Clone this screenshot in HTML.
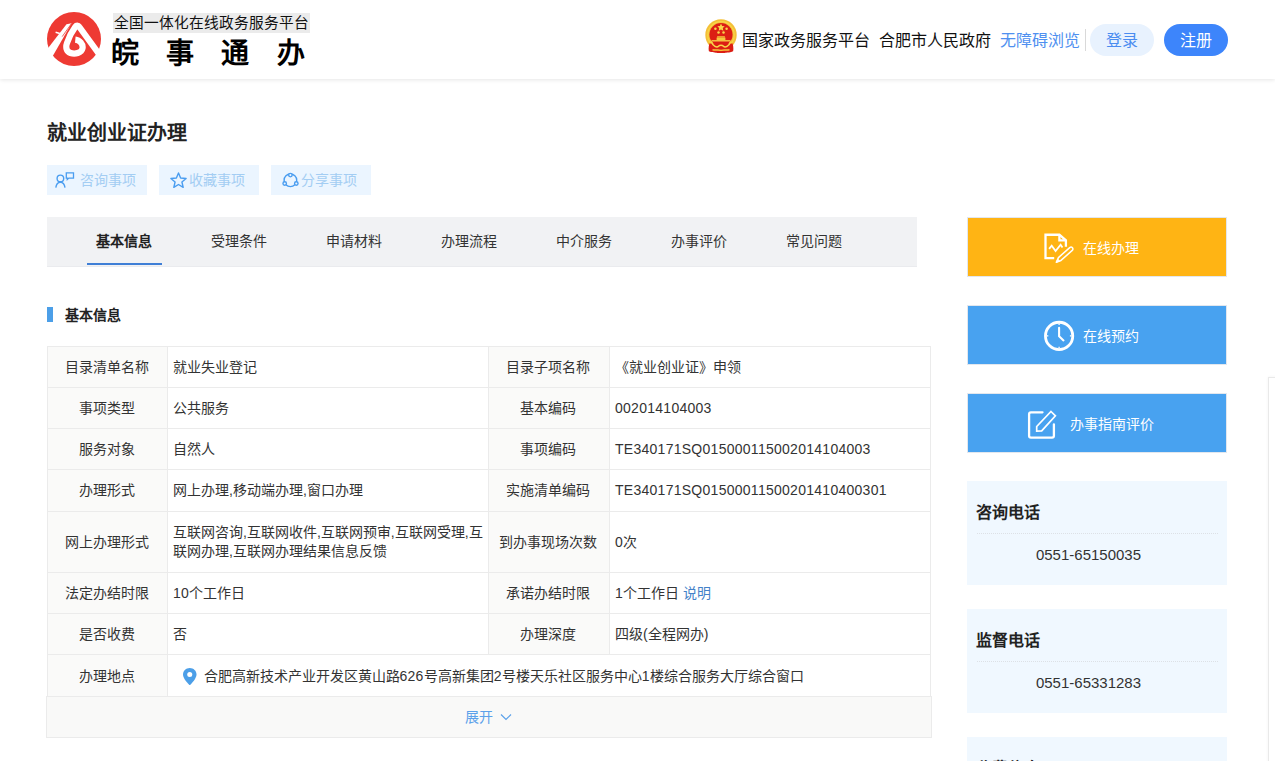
<!DOCTYPE html>
<html lang="zh-CN">
<head>
<meta charset="utf-8">
<title>就业创业证办理</title>
<style>
*{box-sizing:border-box;margin:0;padding:0}
html,body{width:1275px;height:761px;overflow:hidden;background:#fff}
body{font-family:"Liberation Sans",sans-serif;font-size:14px;color:#333;position:relative}
a{text-decoration:none;color:inherit}
.abs{position:absolute;white-space:nowrap}

/* ---------- header ---------- */
#hd{position:absolute;left:0;top:0;width:1275px;height:79px;background:#fff;box-shadow:0 1px 4px rgba(0,0,0,.10)}
#logo{position:absolute;left:47px;top:12px;width:54px;height:54px}
#slogan{position:absolute;left:113px;top:13px;width:197px;height:20px;background:#ebebeb;color:#111;font-size:14.700px;line-height:20px;text-align:center;white-space:nowrap;overflow:hidden}
#brand{position:absolute;left:111px;top:34.500px;height:38px;line-height:38px;font-size:28px;font-weight:bold;color:#000;white-space:nowrap}
#brand span{display:inline-block;width:55.200px;text-align:left}
#emblem{position:absolute;left:704.800px;top:18.900px;width:32px;height:34px}
.hl{position:absolute;top:29px;height:24px;line-height:24px;font-size:16px;color:#111;white-space:nowrap;overflow:hidden}
#hsep{position:absolute;left:1085px;top:29px;width:1px;height:22px;background:#d9d9d9}
.pill{position:absolute;top:24px;width:64px;height:32px;border-radius:16px;line-height:34px;text-align:center;font-size:16px;white-space:nowrap}

/* ---------- title + action buttons ---------- */
#title{position:absolute;left:47px;top:118px;height:30px;line-height:30px;font-size:20px;font-weight:bold;color:#222;white-space:nowrap}
.act{position:absolute;top:165px;width:100px;height:30px;background:#ebf5ff;color:#a3cdf3;font-size:14px;line-height:30px;white-space:nowrap}
.act svg{position:absolute;left:8px;top:6px}
.act span{position:absolute;left:34px;top:0}

/* ---------- tabs ---------- */
#tabs{position:absolute;left:47px;top:217px;width:870px;height:50px;background:#f1f2f4;border-bottom:1px solid #eaebee}
.tab{position:absolute;top:0;width:75px;height:48px;line-height:48px;text-align:center;font-size:14px;color:#333;white-space:nowrap}
.tab.on{font-weight:bold;color:#222;border-bottom:2px solid #3f7fd6}

/* ---------- section heading ---------- */
#secbar{position:absolute;left:47px;top:307px;width:6px;height:15px;background:#4c9fe8}
#sechd{position:absolute;left:65px;top:304px;height:22px;line-height:22px;font-size:14px;font-weight:bold;color:#222;white-space:nowrap}

/* ---------- info table ---------- */
#tb{position:absolute;left:47px;top:346px;width:884px;height:351px;border-right:1px solid #ebebeb}
.r{position:absolute;left:0;width:883px;border-top:1px solid #ebebeb}
.c{position:absolute;top:0;height:100%;border-left:1px solid #ebebeb;display:flex;align-items:center;font-size:14px;color:#333;line-height:19px;overflow:hidden;white-space:nowrap}
.c.l{background:#fafaf9;justify-content:center;white-space:nowrap;padding-right:2px}
.c.v{padding-left:5px;background:#fff}
.c1{left:0;width:120px}.c2{left:120px;width:321px}.c3{left:441px;width:121px}.c4{left:562px;width:321px}
.c2w{left:120px;width:763px}
.n{letter-spacing:.27px}
#more{position:absolute;left:46px;top:696px;width:886px;height:42px;background:#f9f9f8;border:1px solid #ebebeb;color:#5ba1ea;font-size:14px;line-height:40px;white-space:nowrap}

/* ---------- sidebar ---------- */
.sbtn{position:absolute;left:967px;width:260px;height:60px;color:#fff;font-size:14px;line-height:58px;white-space:nowrap;border:1px solid #e2e7ee}
.sbtn svg{position:absolute;overflow:visible}
.sbtn span{position:absolute;top:1px}
.pan{position:absolute;left:967px;width:260px;height:104px;background:#f0f8ff}
.pan h3{position:absolute;left:9px;top:20px;height:24px;line-height:24px;font-size:16px;font-weight:bold;color:#222;white-space:nowrap}
.pan i{position:absolute;left:10px;top:52px;width:241px;height:0;border-top:1px dotted #dde1e6}
.pan p{position:absolute;left:0;top:63px;width:243px;height:22px;line-height:22px;text-align:center;font-size:15px;color:#333;white-space:nowrap}
#float{position:absolute;left:1268px;top:377px;width:20px;height:400px;background:#fff;border:1px solid #e9e9e9;box-shadow:0 0 3px rgba(0,0,0,.05)}
</style>
</head>
<body>

<!-- ================= HEADER ================= -->
<div id="hd">
  <svg id="logo" viewBox="0 0 54 54">
    <circle cx="27" cy="27" r="27" fill="#ee3a33"/>
    <g>
      <path d="M0 37.500L19.500 12.200 24.600 11.300 5.200 45z" fill="#fff"/>
      <path d="M15.200 24.600L24.300 11.800" stroke="#ee3a33" stroke-width=".8" fill="none"/>
      <path d="M8.600 20.200l4.200 1.200" stroke="#fff" stroke-width="1.600" fill="none"/>
      <path d="M28.300 27.600C32.500 28 36.400 32 35.500 36.500C34.500 41 28 42.600 23.500 41C19 39.400 18.600 35 20 31C22 25 25.500 18.500 28.300 14.800C29.400 13.300 31.200 13.300 32.200 14.800L52 42" fill="none" stroke="#fff" stroke-width="6.200" stroke-linejoin="round"/>
    </g>
  </svg>
  <div id="slogan">全国一体化在线政务服务平台</div>
  <div id="brand"><span>皖</span><span>事</span><span>通</span><span>办</span></div>

  <svg id="emblem" viewBox="0 0 32 34">
    <circle cx="16" cy="15.900" r="15.700" fill="#f4c038"/>
    <circle cx="16" cy="15.900" r="13.200" fill="none" stroke="#f8d64a" stroke-width="1.200"/>
    <path d="M4.400 24.500C3.600 27 3.400 29.800 3.900 32.200C6.500 33.800 9.500 33.200 11 33.800C13.500 34.300 18.500 34.300 21 33.800C22.500 33.200 25.500 33.800 28.100 32.200C28.600 29.800 28.400 27 27.600 24.500z" fill="#dc1e14"/>
    <circle cx="16" cy="15.600" r="11.600" fill="#dc1e14"/>
    <path d="M16 4.600l1.100 2.400 2.600.3-1.900 1.800.5 2.600-2.300-1.300-2.300 1.300.5-2.600-1.900-1.800 2.600-.3z" fill="#f8d64a"/>
    <circle cx="10.400" cy="9.800" r="1.250" fill="#f8d64a"/><circle cx="21.600" cy="9.800" r="1.250" fill="#f8d64a"/>
    <circle cx="13.500" cy="13.400" r="1.250" fill="#f8d64a"/><circle cx="18.500" cy="13.400" r="1.250" fill="#f8d64a"/>
    <path d="M12.300 17.200h7.400l.7 1.500h-8.800zM11.600 19h8.800v2.300h-8.800z" fill="#f6c63c"/>
    <path d="M6.500 21.800h19" stroke="#f8d64a" stroke-width="1.300" fill="none"/>
    <path d="M6.200 22.500C8 27.500 12 28.800 13.500 27.200C14.800 25.800 17.200 25.800 18.500 27.200C20 28.800 24 27.500 25.800 22.500" fill="none" stroke="#f8d64a" stroke-width="1.500"/>
    <path d="M7.500 30.600C10 31.800 13 30.300 16 31.400C19 30.300 22 31.800 24.500 30.600" fill="none" stroke="#f6c63c" stroke-width="1.500"/>
  </svg>
  <div class="hl" style="left:742px;width:131px">国家政务服务平台</div>
  <div class="hl" style="left:879px;width:115px">合肥市人民政府</div>
  <div class="hl" style="left:1000px;width:83px;color:#4f90f0">无障碍浏览</div>
  <div id="hsep"></div>
  <div class="pill" style="left:1090px;background:#e8f2fe;color:#4a8cf0">登录</div>
  <div class="pill" style="left:1164px;background:#3d85fb;color:#fff">注册</div>
</div>

<!-- ================= TITLE ================= -->
<div id="title">就业创业证办理</div>

<div class="act" style="left:47px">
  <svg width="22" height="18" viewBox="0 0 22 18" fill="none" stroke="#4a9df0" stroke-width="1.400"><circle cx="5.400" cy="7.400" r="3.300"/><path d="M.800 16.600c.500-3.600 2.300-5.400 4.600-5.400s4.100 1.800 4.600 5.400"/><path d="M11.300 1.800h7.200v5.300h-4.700l-1.500 1.400v-1.400h-1z" stroke-width="1.300"/></svg>
  <span style="left:33.400px">咨询事项</span></div>
<div class="act" style="left:159px">
  <svg width="22" height="19" viewBox="0 0 22 19" fill="none" stroke="#4a9df0" stroke-width="1.400" stroke-linejoin="round"><path d="M11.50 1.90 13.62 6.99 19.11 7.43 14.92 11.01 16.20 16.37 11.50 13.50 6.80 16.37 8.08 11.01 3.89 7.43 9.38 6.99z"/></svg>
  <span style="left:29.500px">收藏事项</span></div>
<div class="act" style="left:271px">
  <svg width="22" height="18" viewBox="0 0 22 18" fill="none" stroke="#4a9df0" stroke-width="1.400"><circle cx="11.400" cy="9.300" r="6.300"/><circle cx="11.400" cy="4.100" r="1.750" fill="#ebf5ff"/><circle cx="5.700" cy="12.500" r="1.750" fill="#ebf5ff"/><circle cx="17.300" cy="12.500" r="1.750" fill="#ebf5ff"/></svg>
  <span style="left:30px">分享事项</span></div>

<!-- ================= TABS ================= -->
<div id="tabs">
  <div class="tab on" style="left:40px;text-indent:-2px">基本信息</div>
  <div class="tab" style="left:154px">受理条件</div>
  <div class="tab" style="left:269px">申请材料</div>
  <div class="tab" style="left:384px">办理流程</div>
  <div class="tab" style="left:499px">中介服务</div>
  <div class="tab" style="left:614px">办事评价</div>
  <div class="tab" style="left:729px">常见问题</div>
</div>

<div id="secbar"></div><div id="sechd">基本信息</div>
<div id="tb">
<div class="r" style="top:0px;height:41px"><div class="c l c1">目录清单名称</div><div class="c v c2"><div>就业失业登记</div></div><div class="c l c3">目录子项名称</div><div class="c v c4"><div>《就业创业证》申领</div></div></div>
<div class="r" style="top:41px;height:41px"><div class="c l c1">事项类型</div><div class="c v c2"><div>公共服务</div></div><div class="c l c3">基本编码</div><div class="c v c4"><div><span class="n">002014104003</span></div></div></div>
<div class="r" style="top:82px;height:41px"><div class="c l c1">服务对象</div><div class="c v c2"><div>自然人</div></div><div class="c l c3">事项编码</div><div class="c v c4"><div><span class="n">TE340171SQ015000115002014104003</span></div></div></div>
<div class="r" style="top:123px;height:42px"><div class="c l c1">办理形式</div><div class="c v c2"><div>网上办理,移动端办理,窗口办理</div></div><div class="c l c3">实施清单编码</div><div class="c v c4"><div><span class="n">TE340171SQ01500011500201410400301</span></div></div></div>
<div class="r" style="top:165px;height:61px"><div class="c l c1">网上办理形式</div><div class="c v c2"><div>互联网咨询,互联网收件,互联网预审,互联网受理,互<br>联网办理,互联网办理结果信息反馈</div></div><div class="c l c3">到办事现场次数</div><div class="c v c4"><div><span class="n">0</span>次</div></div></div>
<div class="r" style="top:226px;height:41px"><div class="c l c1">法定办结时限</div><div class="c v c2"><div><span class="n">10</span>个工作日</div></div><div class="c l c3">承诺办结时限</div><div class="c v c4"><div><span class="n">1</span>个工作日 <a style="color:#4381c8">说明</a></div></div></div>
<div class="r" style="top:267px;height:41px"><div class="c l c1">是否收费</div><div class="c v c2"><div>否</div></div><div class="c l c3">办理深度</div><div class="c v c4"><div>四级(全程网办)</div></div></div>
<div class="r" style="top:308px;height:43px"><div class="c l c1">办理地点</div><div class="c v c2w"><svg style="margin:1px 7px 0 10px;flex:none" width="13.500" height="17.400" viewBox="0 0 14 18"><path d="M7 0C3.1 0 0 3 0 6.8 0 11.5 7 18 7 18s7-6.500 7-11.200C14 3 10.900 0 7 0z" fill="#4c9fe8"/><circle cx="7" cy="6.800" r="2.600" fill="#fff"/></svg><div>合肥高新技术产业开发区黄山路<span class="n">626</span>号高新集团<span class="n">2</span>号楼天乐社区服务中心<span class="n">1</span>楼综合服务大厅综合窗口</div></div></div>
</div>
<div id="more"><span style="position:absolute;left:418px;top:0">展开</span><svg style="position:absolute;left:453px;top:16px" width="12" height="8" viewBox="0 0 12 8" fill="none" stroke="#5ba1ea" stroke-width="1.2"><path d="M1 1.500l5 5 5-5"/></svg></div>


<!-- ================= SIDEBAR ================= -->
<div class="sbtn" style="top:217px;background:#ffb414">
  <svg style="left:76px;top:14px" width="30" height="32" viewBox="0 0 30 32" fill="none" stroke="#fff" stroke-width="2.300"><path d="M10.200 26.200H1.500V2.750H15.400L21.900 8.300V14.800"/><path d="M15.400 2.750V8.300H21.900"/><path d="M5.100 16.900L7.700 13.700 11.600 19 16.600 12.800 18.500 15.600" stroke-width="1.800"/><path d="M12.300 30.300L14.440 25.570 25.740 15.570A1.900 1.900 0 0 1 28.260 18.430L16.960 28.430z" stroke-width="1.500" stroke-linejoin="round"/><path d="M12.300 30.300l1.500-3.300 1.800 2.100z" fill="#fff" stroke-width=".8"/></svg>
  <span style="left:115px">在线办理</span></div>
<div class="sbtn" style="top:305px;background:#48a2f0">
  <svg style="left:76px;top:15px" width="31" height="31" viewBox="0 0 31 31" fill="none" stroke="#fff"><circle cx="15.100" cy="14.900" r="13.650" stroke-width="2.800"/><path d="M15.100 6.800V15.300L19.500 19.400" stroke-width="2.100" stroke-linecap="round" stroke-linejoin="round"/><path d="M15.100 2.500v1.600M15.100 25.700v1.600M2.700 14.900h1.600M25.900 14.900h1.600" stroke-width="1.300"/></svg>
  <span style="left:115px">在线预约</span></div>
<div class="sbtn" style="top:393px;background:#48a2f0">
  <svg style="left:59px;top:14px" width="32" height="32" viewBox="0 0 32 32" fill="none" stroke="#fff" stroke-linecap="round" stroke-linejoin="round"><path d="M15.500 4.350H3.900A1.800 1.800 0 0 0 2.100 6.150V27.800A1.800 1.800 0 0 0 3.900 29.600H25.100A1.800 1.800 0 0 0 26.900 27.800V16.300" stroke-width="2.300"/><path d="M24 3.500L28.400 7.900 14.700 22.900 9.700 23.200V18.500z" stroke-width="1.700" stroke-linejoin="miter"/></svg>
  <span style="left:102px">办事指南评价</span></div>

<div class="pan" style="top:481px"><h3>咨询电话</h3><i></i><p>0551-65150035</p></div>
<div class="pan" style="top:609px"><h3>监督电话</h3><i></i><p>0551-65331283</p></div>
<div class="pan" style="top:737px"><h3>收费信息</h3><i></i><p></p></div>
<div id="float"></div>

</body>
</html>
